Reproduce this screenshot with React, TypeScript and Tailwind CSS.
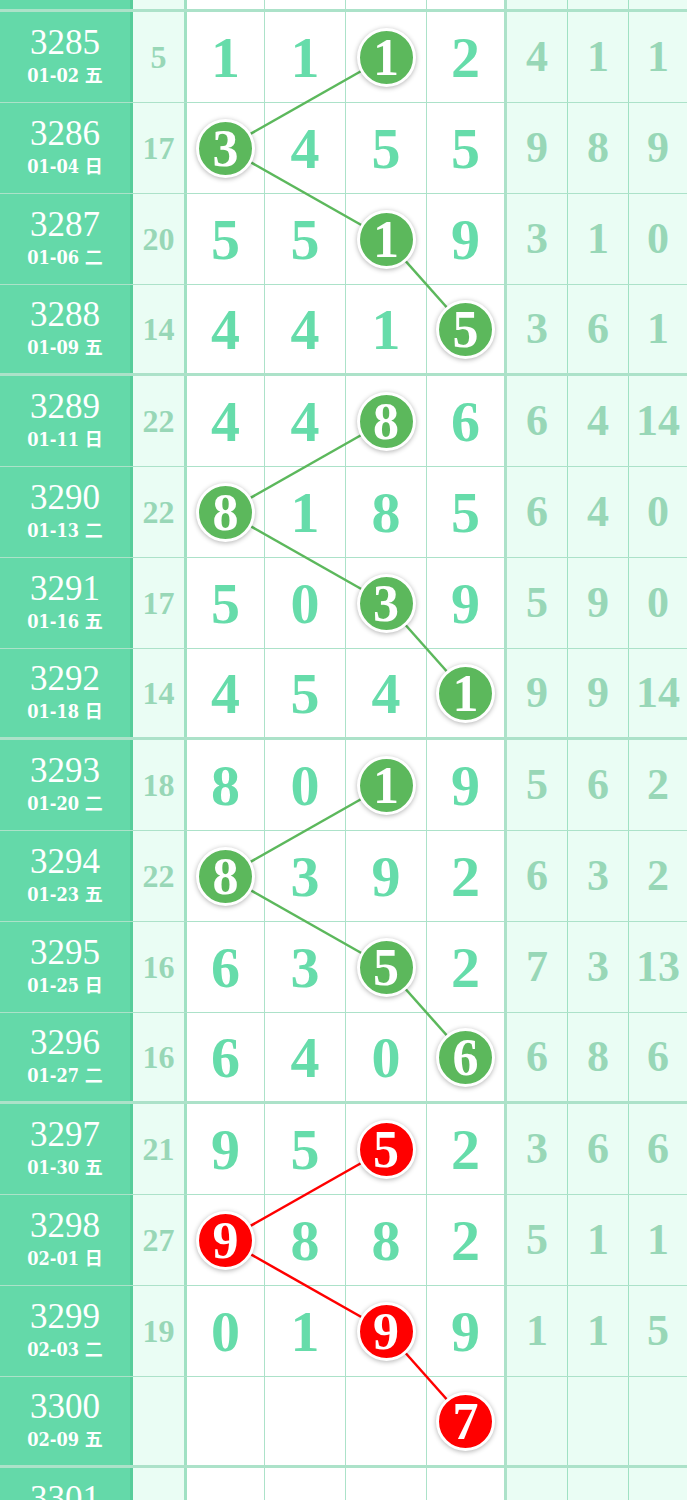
import React from "react";

type Row = {
  no: string;
  date: string;
  sum?: string;
  digits?: string[];
  right?: string[];
  hit: number;
  value: string;
  red?: boolean;
};

const rows: Row[] = [
  { no: "3285", date: "01-02 五", sum: "5", digits: ["1", "1", "1", "2"], right: ["4", "1", "1"], hit: 2, value: "1" },
  { no: "3286", date: "01-04 日", sum: "17", digits: ["3", "4", "5", "5"], right: ["9", "8", "9"], hit: 0, value: "3" },
  { no: "3287", date: "01-06 二", sum: "20", digits: ["5", "5", "1", "9"], right: ["3", "1", "0"], hit: 2, value: "1" },
  { no: "3288", date: "01-09 五", sum: "14", digits: ["4", "4", "1", "5"], right: ["3", "6", "1"], hit: 3, value: "5" },
  { no: "3289", date: "01-11 日", sum: "22", digits: ["4", "4", "8", "6"], right: ["6", "4", "14"], hit: 2, value: "8" },
  { no: "3290", date: "01-13 二", sum: "22", digits: ["8", "1", "8", "5"], right: ["6", "4", "0"], hit: 0, value: "8" },
  { no: "3291", date: "01-16 五", sum: "17", digits: ["5", "0", "3", "9"], right: ["5", "9", "0"], hit: 2, value: "3" },
  { no: "3292", date: "01-18 日", sum: "14", digits: ["4", "5", "4", "1"], right: ["9", "9", "14"], hit: 3, value: "1" },
  { no: "3293", date: "01-20 二", sum: "18", digits: ["8", "0", "1", "9"], right: ["5", "6", "2"], hit: 2, value: "1" },
  { no: "3294", date: "01-23 五", sum: "22", digits: ["8", "3", "9", "2"], right: ["6", "3", "2"], hit: 0, value: "8" },
  { no: "3295", date: "01-25 日", sum: "16", digits: ["6", "3", "5", "2"], right: ["7", "3", "13"], hit: 2, value: "5" },
  { no: "3296", date: "01-27 二", sum: "16", digits: ["6", "4", "0", "6"], right: ["6", "8", "6"], hit: 3, value: "6" },
  { no: "3297", date: "01-30 五", sum: "21", digits: ["9", "5", "5", "2"], right: ["3", "6", "6"], hit: 2, value: "5", red: true },
  { no: "3298", date: "02-01 日", sum: "27", digits: ["9", "8", "8", "2"], right: ["5", "1", "1"], hit: 0, value: "9", red: true },
  { no: "3299", date: "02-03 二", sum: "19", digits: ["0", "1", "9", "9"], right: ["1", "1", "5"], hit: 2, value: "9", red: true },
  { no: "3300", date: "02-09 五", hit: 3, value: "7", red: true },
];

// centers of the four white columns, and row geometry
const colX = [225.5, 305.5, 386, 466];
const TOP = 12;
const ROW = 91;

const serif = "font-['Liberation_Serif',serif]";
const line = "border-[rgba(70,190,135,0.45)]";

const Ball = ({ value, red }: { value: string; red?: boolean }) => (
  <div
    className={`relative z-10 flex h-[59px] w-[59px] items-center justify-center rounded-full border-[3px] border-white shadow-[0_1px_5px_rgba(0,0,0,0.3)] ${
      red ? "bg-[#ff0000]" : "bg-[#5cb85c]"
    }`}
  >
    <span className={`${serif} text-[52px] font-bold leading-none text-white pt-[2px]`}>{value}</span>
  </div>
);

const Cells = ({ row, h, b }: { row?: Row; h: string; b: string }) => (
  <div className={`flex ${h} ${b} ${line}`}>
    <div className={`flex w-[133px] shrink-0 flex-col items-center justify-center border-r-[3px] ${line} bg-[#64d9a9] text-white`}>
      {row && (
        <>
          <span className={`${serif} text-[35px] leading-[32px]`}>{row.no}</span>
          <span className="mt-[6px] font-['DejaVu_Serif','Noto_Sans_CJK_SC',serif] text-[18px] font-bold leading-[22px] font-stretch-condensed">
            {row.date}
          </span>
        </>
      )}
    </div>
    <div className={`flex w-[54px] shrink-0 items-center justify-center border-r-[3px] ${line} bg-[#eafdf4] ${serif} text-[32px] font-bold text-[#98d7b7]`}>
      {row?.sum}
    </div>
    {[0, 1, 2, 3].map((c) => (
      <div
        key={c}
        className={`flex shrink-0 items-center justify-center bg-white ${line} ${
          c === 0 ? "w-[78px] border-r" : c === 3 ? "w-[80px] border-r-[3px]" : "w-[81px] border-r"
        } ${serif} text-[58px] font-bold text-[#66dcaa]`}
      >
        {row && row.hit === c ? <Ball value={row.value} red={row.red} /> : row?.digits?.[c]}
      </div>
    ))}
    {[0, 1, 2].map((c) => (
      <div
        key={c}
        className={`flex shrink-0 items-center justify-center bg-[#eafdf4] ${line} ${
          c === 2 ? "w-[58px]" : "w-[61px] border-r"
        } ${serif} text-[44px] font-bold text-[#98d7b7]`}
      >
        {row?.right?.[c]}
      </div>
    ))}
  </div>
);

export default function App() {
  const pts = rows.map((r, i) => ({ x: colX[r.hit], y: TOP + ROW * i + (i % 4 === 3 ? 44 : 45), red: r.red }));
  const segs = pts.slice(1).map((p, i) => ({ a: pts[i], b: p, i: i + 1 })).filter((s) => s.i % 4 !== 0);

  return (
    <div className="relative h-[1500px] w-[687px] overflow-hidden bg-white">
      <svg className="pointer-events-none absolute inset-0" width={687} height={1500}>
        {segs.map((s) => (
          <line
            key={s.i}
            x1={s.a.x}
            y1={s.a.y}
            x2={s.b.x}
            y2={s.b.y}
            stroke={s.b.red ? "#ff0000" : "#5cb85c"}
            strokeWidth={2.5}
          />
        ))}
      </svg>
      <Cells h="h-[12px]" b="border-b-[3px]" />
      {rows.map((r, i) => (
        <Cells key={r.no} row={r} h="h-[91px]" b={i % 4 === 3 ? "border-b-[3px]" : "border-b"} />
      ))}
      <Cells row={{ no: "3301", date: "02-11 日", hit: -1, value: "" }} h="h-[91px]" b="border-b" />
    </div>
  );
}
